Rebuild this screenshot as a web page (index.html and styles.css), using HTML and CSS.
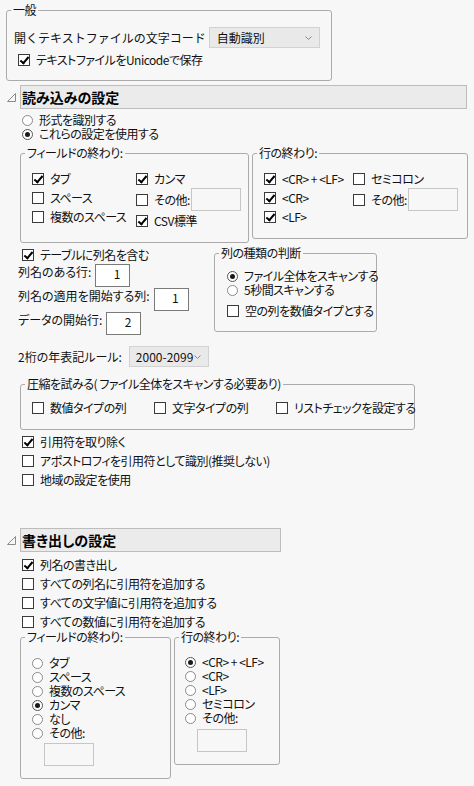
FILE: index.html
```html
<!DOCTYPE html>
<html lang="ja">
<head>
    <meta charset="UTF-8">
    <meta name="viewport" content="width=device-width, initial-scale=1.0">
    <title>テキストデータファイル</title>
    <link rel="stylesheet" href="styles.css">
</head>
<body>
    <div class="panel">
        <fieldset class="group general">
            <legend>一般</legend>
            <div class="group-body">
                <div class="inline-row">
                    <span class="enc-label">開くテキストファイルの文字コード</span>
                    <span class="select encoding">自動識別<svg class="caret" viewBox="0 0 7 4"><path d="M0.5 0.5 3.5 3.5 6.5 0.5"/></svg></span>
                </div>
                <label class="check on"><span class="box"></span>テキストファイルをUnicodeで保存</label>
            </div>
        </fieldset>

        <!-- 読み込み -->
        <div class="section-head">
            <svg class="tri" viewBox="0 0 9 9"><path d="M8.5 0.5 8.5 8.5 0.5 8.5Z"/></svg>
            <h2 class="bar">読み込みの設定</h2>
        </div>
        <div class="section-body import">
            <label class="radio"><span class="dot"></span>形式を識別する</label>
            <label class="radio on"><span class="dot"></span>これらの設定を使用する</label>

            <div class="group-row">
                <fieldset class="group field-end">
                    <legend>フィールドの終わり:</legend>
                    <div class="cols">
                        <div class="col first">
                            <label class="check on"><span class="box"></span>タブ</label>
                            <label class="check"><span class="box"></span>スペース</label>
                            <label class="check"><span class="box"></span>複数のスペース</label>
                        </div>
                        <div class="col">
                            <label class="check on"><span class="box"></span>カンマ</label>
                            <label class="check with-input"><span class="box"></span>その他:<span class="text-input off"></span></label>
                            <label class="check on"><span class="box"></span>CSV標準</label>
                        </div>
                    </div>
                </fieldset>
                <fieldset class="group line-end">
                    <legend>行の終わり:</legend>
                    <div class="cols">
                        <div class="col first">
                            <label class="check on"><span class="box"></span>&lt;CR&gt; + &lt;LF&gt;</label>
                            <label class="check on"><span class="box"></span>&lt;CR&gt;</label>
                            <label class="check on"><span class="box"></span>&lt;LF&gt;</label>
                        </div>
                        <div class="col">
                            <label class="check"><span class="box"></span>セミコロン</label>
                            <label class="check with-input"><span class="box"></span>その他:<span class="text-input off"></span></label>
                        </div>
                    </div>
                </fieldset>
            </div>

            <div class="header-row">
                <div class="header-opts">
                    <label class="check on"><span class="box"></span>テーブルに列名を含む</label>
                    <div class="num-row"><span>列名のある行:</span><span class="text-input num">1</span></div>
                    <div class="num-row"><span>列名の適用を開始する列:</span><span class="text-input num">1</span></div>
                    <div class="num-row"><span>データの開始行:</span><span class="text-input num">2</span></div>
                </div>
                <fieldset class="group col-type">
                    <legend>列の種類の判断</legend>
                    <div class="group-body">
                        <label class="radio on"><span class="dot"></span>ファイル全体をスキャンする</label>
                        <label class="radio"><span class="dot"></span>5秒間スキャンする</label>
                        <label class="check"><span class="box"></span>空の列を数値タイプとする</label>
                    </div>
                </fieldset>
            </div>

            <div class="inline-row year-row">
                <span>2桁の年表記ルール:</span>
                <span class="select year">2000-2099<svg class="caret" viewBox="0 0 7 4"><path d="M0.5 0.5 3.5 3.5 6.5 0.5"/></svg></span>
            </div>

            <fieldset class="group compress">
                <legend>圧縮を試みる( ファイル全体をスキャンする必要あり)</legend>
                <div class="group-body compress-opts">
                    <label class="check"><span class="box"></span>数値タイプの列</label>
                    <label class="check"><span class="box"></span>文字タイプの列</label>
                    <label class="check"><span class="box"></span>リストチェックを設定する</label>
                </div>
            </fieldset>

            <div class="after-compress">
                <label class="check on"><span class="box"></span>引用符を取り除く</label>
                <label class="check"><span class="box"></span>アポストロフィを引用符として識別(推奨しない)</label>
                <label class="check"><span class="box"></span>地域の設定を使用</label>
            </div>
        </div>

        <!-- 書き出し -->
        <div class="section-head export-head">
            <svg class="tri" viewBox="0 0 9 9"><path d="M8.5 0.5 8.5 8.5 0.5 8.5Z"/></svg>
            <h2 class="bar short">書き出しの設定</h2>
        </div>
        <div class="section-body export">
            <label class="check on"><span class="box"></span>列名の書き出し</label>
            <label class="check"><span class="box"></span>すべての列名に引用符を追加する</label>
            <label class="check"><span class="box"></span>すべての文字値に引用符を追加する</label>
            <label class="check"><span class="box"></span>すべての数値に引用符を追加する</label>

            <div class="group-row export-groups">
                <fieldset class="group ex-field">
                    <legend>フィールドの終わり:</legend>
                    <div class="group-body">
                        <label class="radio"><span class="dot"></span>タブ</label>
                        <label class="radio"><span class="dot"></span>スペース</label>
                        <label class="radio"><span class="dot"></span>複数のスペース</label>
                        <label class="radio on"><span class="dot"></span>カンマ</label>
                        <label class="radio"><span class="dot"></span>なし</label>
                        <label class="radio"><span class="dot"></span>その他:</label>
                        <span class="text-input off other"></span>
                    </div>
                </fieldset>
                <fieldset class="group ex-line">
                    <legend>行の終わり:</legend>
                    <div class="group-body">
                        <label class="radio on"><span class="dot"></span>&lt;CR&gt; + &lt;LF&gt;</label>
                        <label class="radio"><span class="dot"></span>&lt;CR&gt;</label>
                        <label class="radio"><span class="dot"></span>&lt;LF&gt;</label>
                        <label class="radio"><span class="dot"></span>セミコロン</label>
                        <label class="radio"><span class="dot"></span>その他:</label>
                        <span class="text-input off other"></span>
                    </div>
                </fieldset>
            </div>
        </div>
    </div>
</body>
</html>
```

FILE: styles.css
```css
body {
    margin: 0;
    background-color: #f7f7f7;
    font-family: "Noto Sans CJK JP", "Noto Sans", sans-serif;
    font-size: 12px;
    line-height: 16px;
    font-feature-settings: "palt";
    letter-spacing: -0.5px;
    color: #111;
}

.panel {
    padding: 2px 0 0 6px;
}

/* group boxes */
.group {
    min-width: 0;
    margin: 0;
    padding: 0;
    border: 1px solid #ababab;
    border-radius: 3px;
    box-sizing: border-box;
}

.group legend {
    margin-left: 4px;
    padding: 0 2px;
    line-height: 16px;
    white-space: nowrap;
}

.general {
    width: 326px;
}

.general .group-body {
    padding: 9px 0 11px 7px;
}

.inline-row {
    display: flex;
    align-items: center;
    height: 21px;
    white-space: nowrap;
}

.enc-label {
    font-feature-settings: normal;
    letter-spacing: 0;
}

.general .check {
    margin-top: 2px;
}

/* dropdowns */
.select {
    display: flex;
    align-items: center;
    justify-content: space-between;
    box-sizing: border-box;
    height: 21px;
    padding: 0 7px 0 7px;
    background: #e9e9e9;
    border: 1px solid #d2d2d2;
    letter-spacing: 0;
}

.encoding {
    width: 111px;
    margin-left: 3px;
}

.year {
    width: 80px;
    margin-left: 7px;
    padding-left: 6px;
}

.caret {
    width: 7px;
    height: 4px;
    fill: none;
    stroke: #888;
    stroke-width: 1;
}

/* checkboxes and radios */
.check {
    display: flex;
    align-items: center;
    height: 19px;
    margin-left: 4px;
    white-space: nowrap;
}

.box {
    position: relative;
    width: 12px;
    height: 12px;
    box-sizing: border-box;
    margin-right: 6px;
    background: #fff;
    border: 1px solid #3a3a3a;
    flex: none;
}

.check.on .box::after {
    content: "";
    position: absolute;
    left: 3px;
    top: 0px;
    width: 3px;
    height: 7px;
    border: solid #000;
    border-width: 0 2px 2px 0;
    transform: rotate(40deg);
}

.radio {
    display: flex;
    align-items: center;
    height: 14px;
    line-height: 14px;
    margin-left: 4px;
    white-space: nowrap;
}

.dot {
    display: flex;
    align-items: center;
    justify-content: center;
    width: 11px;
    height: 11px;
    box-sizing: border-box;
    margin-right: 6px;
    border: 1px solid #8a8a8a;
    border-radius: 50%;
    background: #fff;
    flex: none;
}

.radio.on .dot {
    border-color: #555;
}

.radio.on .dot::after {
    content: "";
    width: 5px;
    height: 5px;
    border-radius: 50%;
    background: #1a1a1a;
}

/* text boxes */
.text-input {
    display: block;
    box-sizing: border-box;
    background: #fff;
}

.text-input.off {
    width: 50px;
    height: 23px;
    background: #f7f7f7;
    border: 1px solid #c6c6c6;
}

.text-input.num {
    width: 35px;
    height: 23px;
    margin-left: 4px;
    padding: 1px 9px 0 0;
    border: 1px solid #7a7a7a;
    text-align: right;
    line-height: 16px;
}

/* section headers */
.section-head {
    display: flex;
    align-items: center;
    margin-top: 4px;
}

.tri {
    width: 9px;
    height: 9px;
    margin: 0 4px 0 1px;
    fill: none;
    stroke: #8a8a8a;
    stroke-width: 1;
}

.bar {
    width: 447px;
    height: 24px;
    box-sizing: border-box;
    margin: 0;
    padding-left: 1px;
    background: #ebebeb;
    border: 1px solid #bdbdbd;
    font-size: 14px;
    font-weight: bold;
    line-height: 22px;
    letter-spacing: 0;
    color: #000;
}

.bar.short {
    width: 261px;
}

.section-body {
    padding-left: 12px;
}

.import {
    margin-top: 4px;
}

.group-row {
    display: flex;
    align-items: flex-start;
    gap: 3px;
    margin: 4px 0 0 2px;
}

.cols {
    display: flex;
    padding: 8px 0 12px 11px;
}

.cols .check {
    margin-left: 0;
}

.field-end {
    width: 229px;
}

.field-end .col.first {
    width: 104px;
}

.line-end {
    width: 216px;
}

.line-end .col.first {
    width: 89px;
}

.with-input {
    height: 23px;
}

.with-input .text-input {
    margin-left: 1px;
}

/* header rows + column type */
.header-row {
    display: flex;
    align-items: flex-start;
    margin-top: 2px;
}

.header-opts {
    width: 194px;
}

.num-row {
    display: flex;
    align-items: flex-start;
    height: 24px;
    white-space: nowrap;
    letter-spacing: 0;
}

.col-type {
    width: 163px;
    margin-left: 2px;
}

.col-type .group-body {
    padding: 8px 0 11px 8px;
}

.col-type .check {
    margin-top: 4px;
}

.year-row {
    margin-top: 10px;
    letter-spacing: 0;
}

.compress {
    width: 395px;
    margin: 9px 0 0 2px;
}

.compress-opts {
    display: grid;
    grid-template-columns: 122px 122px auto;
    padding: 6px 0 12px 11px;
}

.compress-opts .check {
    margin-left: 0;
}

.after-compress {
    margin-top: 2px;
}

.export-head {
    margin-top: 39px;
}

.export {
    margin-top: 3px;
}

.export-groups {
    margin-top: -2px;
}

.ex-field {
    width: 151px;
}

.ex-field .group-body {
    padding: 11px 0 12px 7px;
}

.ex-line {
    width: 106px;
}

.ex-line .group-body {
    padding: 10px 0 12px 6px;
}

.other {
    margin: 3px 0 0 16px;
}

.ex-line .other {
    height: 23px;
    margin-top: 4px;
}
```
